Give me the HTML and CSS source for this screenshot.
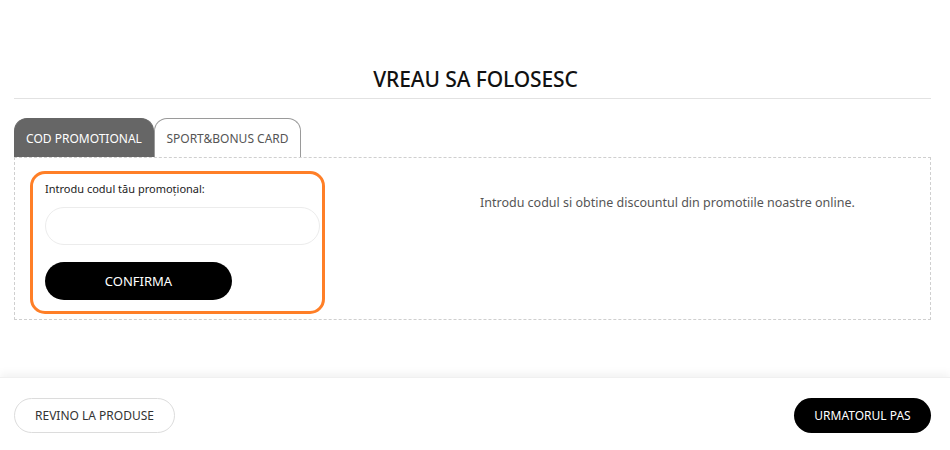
FILE: index.html
```html
<!DOCTYPE html>
<html lang="ro">
<head>
<meta charset="utf-8">
<title>Vreau sa folosesc</title>
<link rel="stylesheet" href="styles.css">
</head>
<body>
<main class="page">
  <h1 class="title">VREAU SA FOLOSESC</h1>
  <div class="tabs">
    <div class="tab tab-active">COD PROMOTIONAL</div>
    <div class="tab">SPORT&amp;BONUS CARD</div>
  </div>
  <section class="panel">
    <div class="promo-box">
      <label class="promo-label" for="code">Introdu codul tău promoțional:</label>
      <input class="promo-input" id="code" type="text">
      <button class="btn btn-dark btn-confirm">CONFIRMA</button>
    </div>
    <p class="panel-info">Introdu codul si obtine discountul din promotiile noastre online.</p>
  </section>
</main>
<footer class="footer">
  <button class="btn btn-light">REVINO LA PRODUSE</button>
  <button class="btn btn-dark btn-next">URMATORUL PAS</button>
</footer>
</body>
</html>
```
FILE: styles.css
```css
* { box-sizing: border-box; }
html, body { margin: 0; padding: 0; background: #fff; }
body {
  font-family: "Noto Sans", "Open Sans", sans-serif;
  color: #222;
  width: 950px;
  height: 450px;
  overflow: hidden;
  display: flex;
  flex-direction: column;
}
.page {
  padding: 66px 19px 0 14px;
  flex: 1;
}
.title {
  margin: 0;
  font-size: 21px;
  font-weight: 500;
  line-height: 26px;
  text-align: center;
  color: #111;
  padding-bottom: 6px;
  border-bottom: 1px solid #e2e2e2;
  letter-spacing: -0.1px;
  padding-left: 6px;
}
.tabs {
  display: flex;
  margin-top: 19px;
  height: 39px;
}
.tab {
  display: flex;
  align-items: center;
  justify-content: center;
  font-size: 12px;
  color: #555;
  border: 1px solid #9a9a9a;
  border-bottom: none;
  border-radius: 13px 13px 0 0;
  background: #fff;
  width: 147px;
}
.tab-active {
  background: #666;
  border-color: #666;
  color: #fff;
  width: 140px;
}
.panel {
  border: 1px dashed #cfcfcf;
  height: 163px;
  display: flex;
  padding: 13px 0 0 15px;
}
.promo-box {
  width: 295px;
  height: 143px;
  border: 3px solid #ff7f27;
  border-radius: 15px;
  padding: 7px 2px 0 12px;
  display: flex;
  flex-direction: column;
}
.promo-label {
  font-size: 11px;
  color: #222;
  line-height: 16px;
}
.promo-input {
  margin-top: 10px;
  width: 275px;
  height: 38px;
  border: 1px solid #ececec;
  border-radius: 19px;
  outline: none;
}
.btn {
  font-family: inherit;
  cursor: pointer;
  border-radius: 19px;
  font-size: 12px;
}
.btn-dark {
  background: #000;
  color: #fff;
  border: none;
}
.btn-confirm {
  margin-top: 17px;
  width: 187px;
  height: 38px;
  font-size: 13px;
}
.panel-info {
  margin: 23px 0 0 155px;
  font-size: 12.5px;
  color: #555;
  line-height: 18px;
}
.footer {
  height: 73px;
  box-shadow: 0 -4px 8px rgba(0, 0, 0, 0.05);
  border-top: 1px solid #f0f0f0;
  display: flex;
  justify-content: space-between;
  align-items: flex-start;
  padding: 20px 19px 0 14px;
}
.btn-light {
  background: #fff;
  color: #333;
  border: 1px solid #dcdcdc;
  width: 161px;
  height: 35px;
  border-radius: 18px;
}
.btn-next {
  width: 137px;
  height: 35px;
  border-radius: 18px;
}
```
